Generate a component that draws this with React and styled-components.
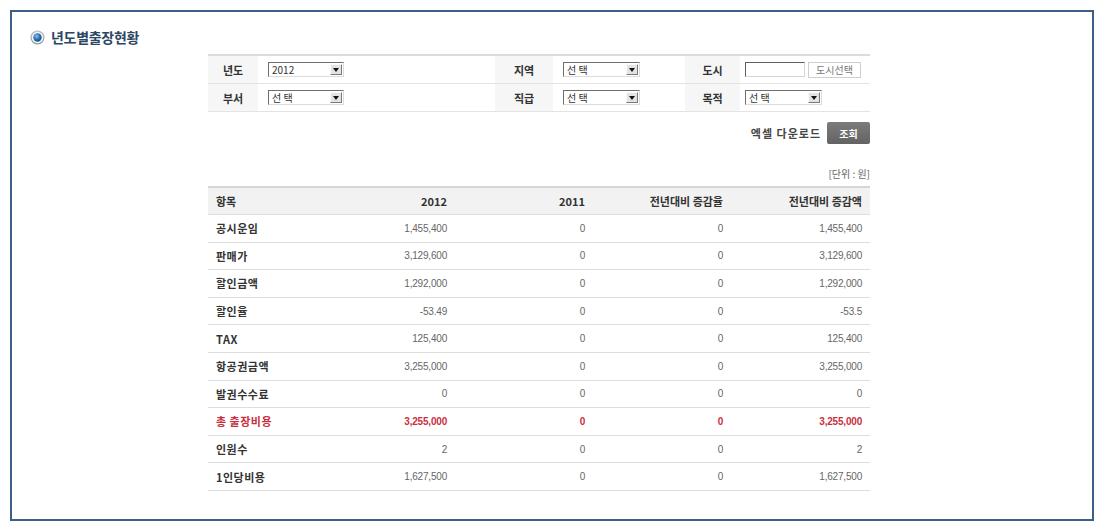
import React from "react"
import styled, { createGlobalStyle } from "styled-components"

const GlobalStyle = createGlobalStyle`
  html, body {
    margin: 0;
    padding: 0;
    background: #fff;
  }
  body {
    font-family: "Liberation Sans", "Noto Sans CJK KR", sans-serif;
    color: #333;
  }
`

const Frame = styled.div`
  box-sizing: border-box;
  margin: 10px 0 0 10px;
  width: 1084px;
  height: 511px;
  border: 2px solid #3d5f85;
  padding: 17px 0 0 18px;
`

const TitleRow = styled.div`
  display: flex;
  align-items: center;
  gap: 6px;
  height: 16px;
`

const TitleText = styled.h2`
  margin: 0;
  font-family: "Noto Sans CJK KR", sans-serif;
  font-size: 14px;
  font-weight: 700;
  color: #2d4763;
  letter-spacing: -0.3px;
`

const Content = styled.div`
  margin: 9px 0 0 178px;
  width: 662px;
`

const FilterTable = styled.div`
  display: grid;
  grid-template-columns: 50px 237px 58px 132px 55px 130px;
  border-top: 2px solid #dcdcdc;
`

const LabelCell = styled.div`
  display: flex;
  align-items: center;
  justify-content: center;
  height: 27px;
  background: #f6f6f6;
  border-bottom: 1px solid #e3e3e3;
  font-family: "Noto Sans CJK KR", sans-serif;
  font-size: 11px;
  font-weight: 700;
  color: #333;
`

const ValueCell = styled.div`
  display: flex;
  align-items: center;
  gap: 3px;
  height: 27px;
  padding-left: ${(p) => p.$pad || 10}px;
  border-bottom: 1px solid #e3e3e3;
`

const SelectBox = styled.div`
  box-sizing: border-box;
  display: flex;
  align-items: center;
  justify-content: space-between;
  width: ${(p) => p.$w || 76}px;
  height: 15px;
  border-style: solid;
  border-width: 1px;
  border-color: #6f6f6f #dcdcdc #dcdcdc #6f6f6f;
  background: #fff;
  padding: 0 1px 0 3px;
  font-family: "Noto Sans CJK KR", sans-serif;
  font-size: 10px;
  color: #333;
`

const ArrowBox = styled.span`
  box-sizing: border-box;
  display: flex;
  align-items: center;
  justify-content: center;
  width: 12px;
  height: 11px;
  background: #e3e3e3;
  border-style: solid;
  border-width: 1px;
  border-color: #fafafa #7a7a7a #7a7a7a #fafafa;
`

const TextInput = styled.div`
  box-sizing: border-box;
  width: 60px;
  height: 15px;
  border-style: solid;
  border-width: 1px;
  border-color: #5f5f5f #d6d6d6 #d6d6d6 #5f5f5f;
`

const SmallButton = styled.div`
  box-sizing: border-box;
  display: flex;
  align-items: center;
  justify-content: center;
  width: 53px;
  height: 16px;
  border: 1px solid #cfcfcf;
  background: #fff;
  font-family: "Noto Sans CJK KR", sans-serif;
  font-size: 10px;
  color: #777;
`

const ActionRow = styled.div`
  display: flex;
  justify-content: flex-end;
  align-items: center;
  gap: 6px;
  margin-top: 10px;
  height: 22px;
`

const ExcelLink = styled.span`
  font-family: "Noto Sans CJK KR", sans-serif;
  font-size: 11px;
  font-weight: 700;
  color: #444;
  letter-spacing: 1px;
`

const SearchButton = styled.div`
  display: flex;
  align-items: center;
  justify-content: center;
  width: 43px;
  height: 22px;
  background: linear-gradient(#7c7c7c, #636363);
  border-radius: 2px;
  font-family: "Noto Sans CJK KR", sans-serif;
  font-size: 10px;
  font-weight: 700;
  color: #fff;
`

const Unit = styled.div`
  margin-top: 22px;
  text-align: right;
  font-family: "Noto Sans CJK KR", sans-serif;
  font-size: 10px;
  color: #666;
  height: 15px;
  line-height: 15px;
`

const DataTable = styled.table`
  margin-top: 5px;
  width: 662px;
  border-collapse: collapse;
  table-layout: fixed;
  border-top: 2px solid #d6d6d6;
`

const HeadCell = styled.th`
  height: 26px;
  padding: 0 8px;
  background: #f2f2f2;
  border-bottom: 1px solid #dedede;
  text-align: ${(p) => (p.$left ? "left" : "right")};
  font-family: "Noto Sans CJK KR", sans-serif;
  font-size: 11px;
  font-weight: 700;
  color: #333;
`

const Cell = styled.td`
  height: 26.6px;
  padding: 0 8px;
  border-bottom: 1px solid #dedede;
  text-align: ${(p) => (p.$left ? "left" : "right")};
  font-family: ${(p) =>
    p.$left ? `"Noto Sans CJK KR", sans-serif` : `"Liberation Sans", sans-serif`};
  font-size: ${(p) => (p.$left ? 11 : 10)}px;
  font-weight: ${(p) => (p.$left || p.$red ? 700 : 400)};
  color: ${(p) => (p.$red ? "#c9303f" : p.$left ? "#333" : "#666")};
  letter-spacing: ${(p) => (p.$left ? "0.5px" : "-0.2px")};
`

const RadioIcon = () => (
  <svg width="15" height="15" viewBox="0 0 15 15">
    <defs>
      <radialGradient id="dot" cx="40%" cy="35%" r="65%">
        <stop offset="0%" stopColor="#8fc3f0" />
        <stop offset="60%" stopColor="#2a6fb8" />
        <stop offset="100%" stopColor="#1b4e8a" />
      </radialGradient>
      <linearGradient id="ring" x1="0" y1="0" x2="0" y2="1">
        <stop offset="0%" stopColor="#b9c1ca" />
        <stop offset="100%" stopColor="#8a96a3" />
      </linearGradient>
    </defs>
    <circle cx="7.5" cy="7.5" r="7" fill="url(#ring)" />
    <circle cx="7.5" cy="7.5" r="5.8" fill="#f4f6f8" />
    <circle cx="7.5" cy="7.5" r="4.2" fill="url(#dot)" />
  </svg>
)

const Arrow = () => (
  <svg width="6" height="4" viewBox="0 0 6 4">
    <path d="M0 0 H6 L3 4 Z" fill="#111" />
  </svg>
)

const Select = ({ value, w }) => (
  <SelectBox $w={w}>
    <span>{value}</span>
    <ArrowBox>
      <Arrow />
    </ArrowBox>
  </SelectBox>
)

const rows = [
  ["공시운임", "1,455,400", "0", "0", "1,455,400"],
  ["판매가", "3,129,600", "0", "0", "3,129,600"],
  ["할인금액", "1,292,000", "0", "0", "1,292,000"],
  ["할인율", "-53.49", "0", "0", "-53.5"],
  ["TAX", "125,400", "0", "0", "125,400"],
  ["항공권금액", "3,255,000", "0", "0", "3,255,000"],
  ["발권수수료", "0", "0", "0", "0"],
  ["총 출장비용", "3,255,000", "0", "0", "3,255,000", true],
  ["인원수", "2", "0", "0", "2"],
  ["1인당비용", "1,627,500", "0", "0", "1,627,500"],
]

const App = () => (
  <>
    <GlobalStyle />
    <Frame>
      <TitleRow>
        <RadioIcon />
        <TitleText>년도별출장현황</TitleText>
      </TitleRow>
      <Content>
        <FilterTable>
          <LabelCell>년도</LabelCell>
          <ValueCell>
            <Select value="2012" w={76} />
          </ValueCell>
          <LabelCell>지역</LabelCell>
          <ValueCell>
            <Select value="선 택" w={77} />
          </ValueCell>
          <LabelCell>도시</LabelCell>
          <ValueCell $pad={5}>
            <TextInput />
            <SmallButton>도시선택</SmallButton>
          </ValueCell>
          <LabelCell>부서</LabelCell>
          <ValueCell>
            <Select value="선 택" w={76} />
          </ValueCell>
          <LabelCell>직급</LabelCell>
          <ValueCell>
            <Select value="선 택" w={77} />
          </ValueCell>
          <LabelCell>목적</LabelCell>
          <ValueCell $pad={5}>
            <Select value="선 택" w={77} />
          </ValueCell>
        </FilterTable>

        <ActionRow>
          <ExcelLink>엑셀 다운로드</ExcelLink>
          <SearchButton>조회</SearchButton>
        </ActionRow>

        <Unit>[단위 : 원]</Unit>

        <DataTable>
          <colgroup>
            <col style={{ width: 109 }} />
            <col style={{ width: 138 }} />
            <col style={{ width: 138 }} />
            <col style={{ width: 138 }} />
            <col style={{ width: 139 }} />
          </colgroup>
          <thead>
            <tr>
              <HeadCell $left>항목</HeadCell>
              <HeadCell>2012</HeadCell>
              <HeadCell>2011</HeadCell>
              <HeadCell>전년대비 증감율</HeadCell>
              <HeadCell>전년대비 증감액</HeadCell>
            </tr>
          </thead>
          <tbody>
            {rows.map(([name, a, b, c, d, red]) => (
              <tr key={name}>
                <Cell $left $red={red}>
                  {name}
                </Cell>
                <Cell $red={red}>{a}</Cell>
                <Cell $red={red}>{b}</Cell>
                <Cell $red={red}>{c}</Cell>
                <Cell $red={red}>{d}</Cell>
              </tr>
            ))}
          </tbody>
        </DataTable>
      </Content>
    </Frame>
  </>
)

export default App
